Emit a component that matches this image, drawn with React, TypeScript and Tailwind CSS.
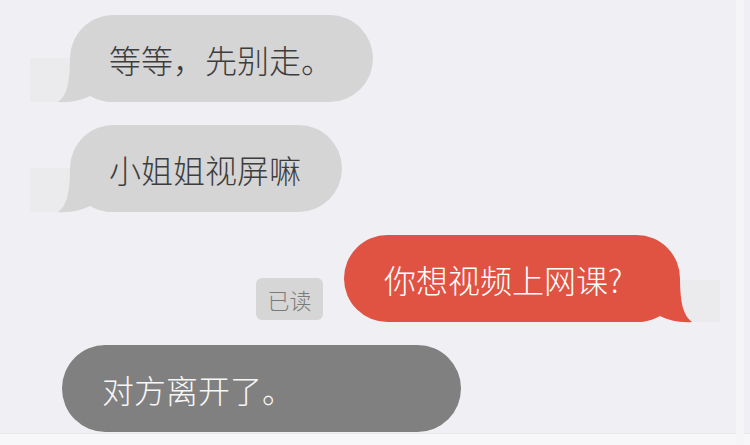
import React from 'react';

const FONT = { fontFamily: '"Noto Sans CJK SC", "Noto Sans", sans-serif' };

function LeftTail({ color }: { color: string }) {
  // tail hanging off the bottom-left corner of an incoming bubble
  return (
    <svg className="absolute left-[-14px] top-[40px]" width="60" height="48" viewBox="0 0 60 48">
      <path d="M14,3 C14,30 10,41 2,47 C14,48 26,45 34,41 C42,45 48,47 58,47 L58,3 Z" fill={color} />
    </svg>
  );
}

function RightTail({ color }: { color: string }) {
  return (
    <svg className="absolute right-[-14px] top-[40px]" width="60" height="48" viewBox="0 0 60 48">
      <path d="M46,3 C46,30 50,41 58,47 C46,48 34,45 26,41 C18,45 12,47 2,47 L2,3 Z" fill={color} />
    </svg>
  );
}

export default function App() {
  return (
    <div className="relative h-[445px] w-[750px] overflow-hidden bg-[#f0eff4]" style={FONT}>
      <div className="flex flex-col gap-[23px] pt-[15px]">
        <div className="pl-[70px]">
          <div className="relative flex h-[87px] w-[303px] items-center">
            <div className="absolute left-[-40px] top-[43px] h-[44px] w-[40px] bg-[#ebebed]" />
            <LeftTail color="#d5d5d5" />
            <div className="relative flex h-full w-full items-center rounded-full bg-[#d5d5d5] pl-[39px] text-[32px] font-light text-[#3d3d3d]">
              等等，先别走。
            </div>
          </div>
        </div>

        <div className="pl-[70px]">
          <div className="relative flex h-[87px] w-[272px] items-center">
            <div className="absolute left-[-40px] top-[43px] h-[44px] w-[40px] bg-[#ebebed]" />
            <LeftTail color="#d5d5d5" />
            <div className="relative flex h-full w-full items-center rounded-full bg-[#d5d5d5] pl-[39px] text-[32px] font-light text-[#3d3d3d]">
              小姐姐视屏嘛
            </div>
          </div>
        </div>

        <div className="flex items-end justify-end pr-[70px]">
          <div className="mb-[2px] mr-[21px] flex h-[42px] w-[67px] items-center justify-center rounded-[6px] bg-[#d6d6d6] text-[22px] font-light text-[#7a7a7a]">
            已读
          </div>
          <div className="relative h-[87px] w-[336px]">
            <div className="absolute right-[-40px] top-[45px] h-[42px] w-[40px] bg-[#ebebed]" />
            <RightTail color="#e05343" />
            <div className="relative flex h-full w-full items-center rounded-full bg-[#e05343] pl-[40px] text-[32px] font-light text-white">
              你想视频上网课?
            </div>
          </div>
        </div>

        <div className="pl-[62px]">
          <div className="flex h-[87px] w-[399px] items-center rounded-full bg-[#808080] pl-[40px] text-[32px] font-light text-[#f7f7f7]">
            对方离开了。
          </div>
        </div>
      </div>

      <div className="absolute bottom-0 left-0 h-[12px] w-full border-t border-[#e8e8ec] bg-[#f7f7f9]" />
      <div className="absolute right-[6px] top-0 h-full w-[8px] bg-[#f5f5f8]" />
    </div>
  );
}
